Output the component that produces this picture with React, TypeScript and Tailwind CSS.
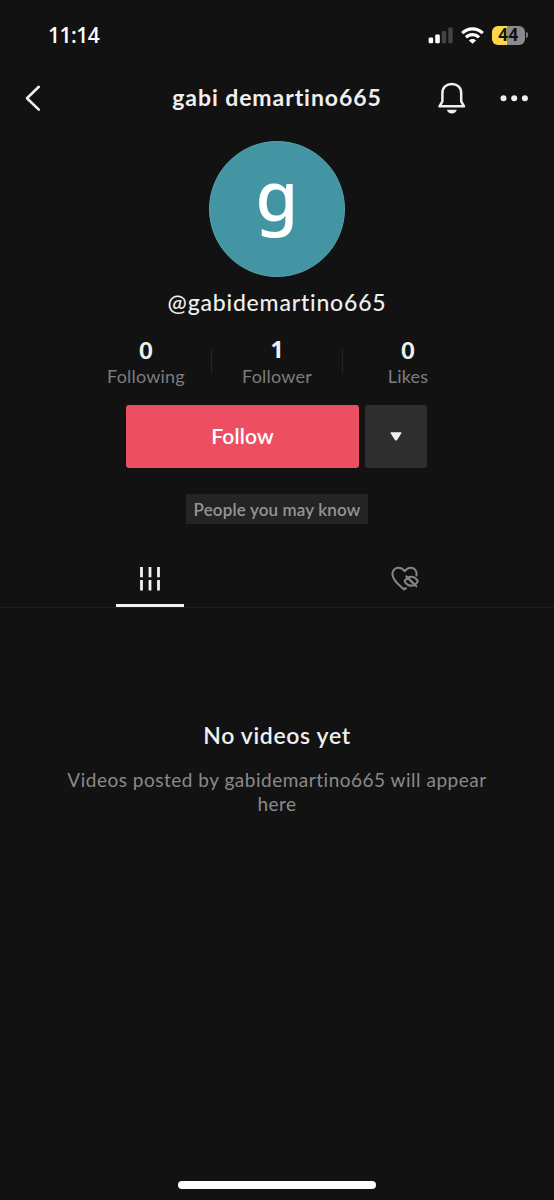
import type { ReactNode } from "react";

function Stat({ value, label, valueClass }: { value: string; label: string; valueClass: string }) {
  return (
    <div className="flex w-[130px] flex-col items-center">
      <div className={`flex h-6 items-center text-[23px] leading-6 ${valueClass}`}>{value}</div>
      <div className="flex h-[29px] items-center text-[18px] tracking-[0.2px] text-[#7d7d7d]">{label}</div>
    </div>
  );
}

function Tab({ active, children }: { active?: boolean; children: ReactNode }) {
  return (
    <div className="flex w-[68px] flex-col items-center">
      <div className="flex h-[50px] items-center justify-center">{children}</div>
      <div className={`h-[3px] w-full ${active ? "bg-[#f4f4f4]" : ""}`} />
    </div>
  );
}

function StatusBar() {
  return (
    <div className="flex h-[70px] items-center justify-between pr-[26px] pl-[48px]">
      <span className="pt-[2px] font-['Open_Sans','Noto_Sans',sans-serif] text-[21px] font-semibold tracking-[-0.5px] text-white">11:14</span>
      <div className="flex items-center">
        <svg width="25" height="17" viewBox="0 0 25 17" fill="#fff">
          <rect x="0.6" y="10.5" width="4.6" height="5.7" rx="1.3" />
          <rect x="7.2" y="7.5" width="4.6" height="8.7" rx="1.3" />
          <rect x="13.8" y="4" width="4.4" height="12.2" rx="1.3" fill="#444" />
          <rect x="20.3" y="0.4" width="4.4" height="15.8" rx="1.3" fill="#444" />
        </svg>
        <svg className="ml-2" width="23" height="17" viewBox="0 0 23 17" fill="none" stroke="#fff" strokeWidth="3.2">
          <path d="M1.2 6.1a14.6 14.6 0 0 1 20.6 0" />
          <path d="M5 10.3a9.3 9.3 0 0 1 13 0" />
          <path d="M11.5 16.8 7.9 13.4a5.2 5.2 0 0 1 7.2 0Z" fill="#fff" stroke="none" />
        </svg>
        <div className="ml-[8px] flex h-[19px] w-[33px] items-center justify-center rounded-[6px] bg-[linear-gradient(90deg,#fcd848_44%,#8a8a8a_44%)] pb-px font-['Open_Sans',sans-serif] text-[17px] leading-none font-bold tracking-[0.5px] text-[#111]">44</div>
        <div className="ml-px h-[6px] w-[2px] rounded-r-full bg-[#777]" />
      </div>
    </div>
  );
}

function Header() {
  return (
    <header className="grid h-14 grid-cols-[140px_1fr_140px] items-center text-[#efefef]">
      <svg className="ml-[24px]" width="18" height="28" viewBox="0 0 18 28" fill="none" stroke="currentColor" strokeWidth="2.6" strokeLinecap="round" strokeLinejoin="round">
        <path d="M14.8 2.8 3 14.2 14.8 25.6" />
      </svg>
      <h1 className="pb-px text-center text-[23px] font-bold tracking-[0.92px] whitespace-nowrap">gabi demartino665</h1>
      <div className="flex items-center">
        <svg className="ml-[23px]" width="30" height="34" viewBox="0 0 30 34" fill="none">
          <path d="M2.5 25.3H27L24.2 20.3V12.2C24.2 6.5 20.2 3 14.8 3S5.4 6.5 5.4 12.2V20.3Z" stroke="currentColor" strokeWidth="2.5" strokeLinejoin="round" />
          <path d="M9.8 28.8h10c-.6 2.3-2.5 3.8-5 3.8s-4.4-1.5-5-3.8Z" fill="currentColor" />
        </svg>
        <svg className="ml-[33px]" width="28" height="8" viewBox="0 0 28 8" fill="currentColor">
          <circle cx="3.5" cy="4.2" r="3" />
          <circle cx="14.2" cy="4.2" r="3" />
          <circle cx="24.9" cy="4.2" r="3" />
        </svg>
      </div>
    </header>
  );
}

export default function App() {
  return (
    <div className="flex h-[1200px] w-[554px] flex-col bg-[#121212] font-['Lato','Open_Sans',sans-serif] text-[#efefef]">
      <StatusBar />
      <Header />
      <main className="flex flex-1 flex-col items-center">
        <div className="mt-[15px] flex h-[136px] w-[136px] shrink-0 items-center justify-center rounded-full border border-[#51a5b0] bg-[#4495a3] pb-[30px] font-['Noto_Sans','Open_Sans',sans-serif] text-[69px] leading-none font-medium text-white">g</div>
        <div className="mt-[11px] flex h-7 items-center text-[23px] font-medium tracking-[0.8px]">@gabidemartino665</div>
        <div className="mt-[22px] flex items-center">
          <Stat value="0" label="Following" valueClass="font-black" />
          <div className="mb-[5px] h-6 w-px bg-[#242424]" />
          <Stat value="1" label="Follower" valueClass="pb-[3px] font-['Open_Sans','Noto_Sans',sans-serif] font-bold" />
          <div className="mb-[5px] h-6 w-px bg-[#242424]" />
          <Stat value="0" label="Likes" valueClass="font-black" />
        </div>
        <div className="mt-[14px] mr-px flex gap-[6px]">
          <button className="h-[63px] w-[233px] rounded-[3px] bg-[#ed4f62] pb-[2px] text-[21px] font-semibold tracking-[0.15px] text-white">Follow</button>
          <button className="flex h-[63px] w-[62px] items-center justify-center rounded-[3px] bg-[#2e2e2e]">
            <svg width="12" height="9" viewBox="0 0 12 9" fill="#efefef">
              <path d="M1.1.3h9.8q1 .2.4 1.1L7.1 7.9Q6 9 4.9 7.9L.7 1.4Q.1.5 1.1.3Z" />
            </svg>
          </button>
        </div>
        <div className="mt-[26px] flex h-[30px] w-[182px] items-center justify-center bg-[#242424] pt-px text-[17px] font-semibold tracking-[0.15px] whitespace-nowrap text-[#949494]">People you may know</div>
        <div className="mt-[30px] flex w-full justify-between border-b border-[#202020] pr-[115px] pl-[115.5px]">
          <Tab active>
            <svg width="22" height="24" viewBox="0 0 22 24" stroke="#f1f1f1" strokeWidth="2.8">
              <path d="M2.5 0v10.2M11 0v10.2M19.5 0v10.2M2.5 13v10.5M11 13v10.5M19.5 13v10.5" />
            </svg>
          </Tab>
          <Tab>
            <svg width="28" height="26" viewBox="0 0 28 26" fill="none" stroke="#858585" strokeWidth="2.1" strokeLinecap="round" strokeLinejoin="round">
              <path d="M25.5 9.4C26.2 4.8 23.4 1.8 19.8 1.8 16.8 1.8 15.1 3.3 13.7 5.2 12.3 3.3 10.6 1.8 7.6 1.8 4.2 1.8 1.4 4.5 1.4 8.1c0 5 4.6 9.4 9.4 13.4l2.4 1.9 1.7-1.2" />
              <path d="M13.6 15.2c1.6-2.9 4-4.4 6.6-4.4s5 1.5 6.6 4.4c-1.6 2.9-4 4.4-6.6 4.4s-5-1.5-6.6-4.4ZM15.3 10.3l10 10" />
              <path d="M18.7 13.7l3 3" />
            </svg>
          </Tab>
        </div>
        <h2 className="mt-[113px] flex h-7 items-center text-[23px] font-semibold tracking-[0.65px]">No videos yet</h2>
        <p className="mt-[19px] w-[440px] text-center text-[19px] leading-6 tracking-[0.51px] text-[#8a8a8a]">Videos posted by gabidemartino665 will appear here</p>
        <div className="mt-auto mb-[11px] h-[8px] w-[198px] rounded-full bg-white" />
      </main>
    </div>
  );
}
